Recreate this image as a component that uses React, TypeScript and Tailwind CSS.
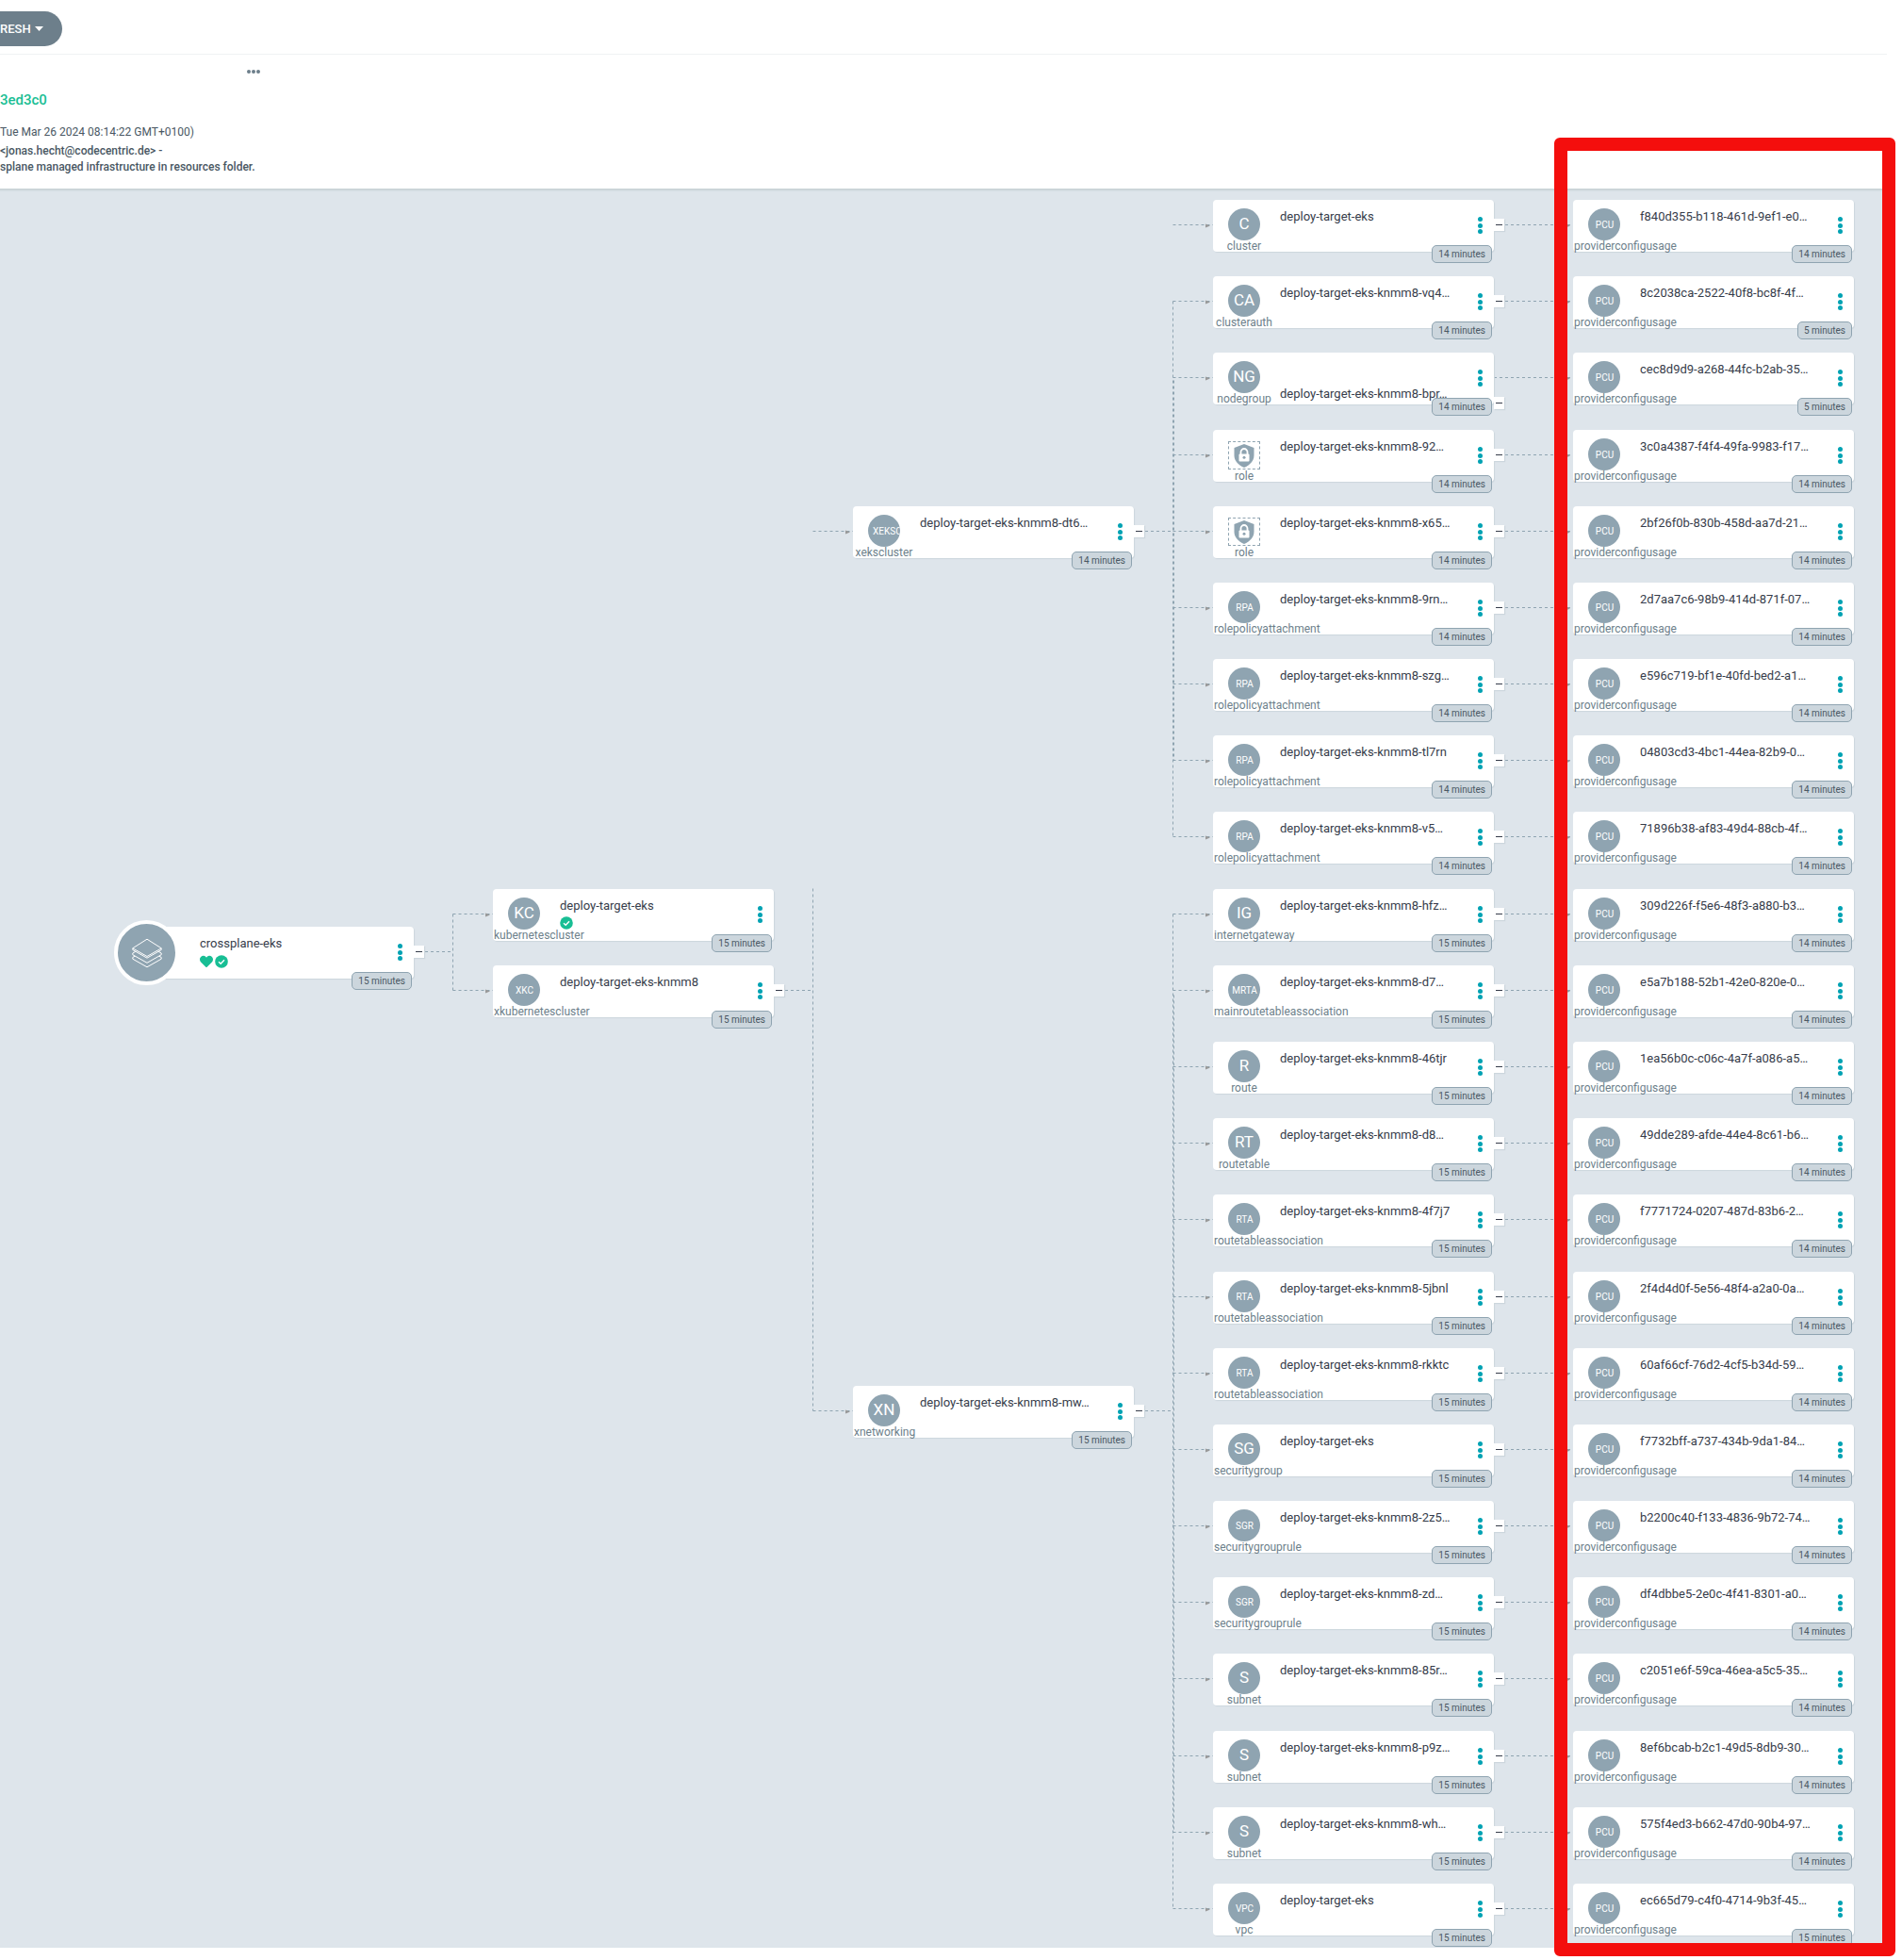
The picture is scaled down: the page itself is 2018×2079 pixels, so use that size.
import React from "react";

const CARD_W = 298;
const ROW_PITCH = 81.18;
const ROW_START = 12;
const COLS = [141, 523, 905, 1287, 1669];

const rowTop = (row: number) => Math.round(ROW_START + row * ROW_PITCH);
const lineY = (row: number) => rowTop(row) + 26.5;

type TreeNode = {
  col: number;
  row: number;
  abbr: string;
  kind: string;
  name: string;
  age: string;
  synced?: boolean;
  expandable?: boolean;
  wrapped?: boolean;
};

const resources: [string, string, string, string][] = [
  ["C", "cluster", "deploy-target-eks", "f840d355-b118-461d-9ef1-e0…"],
  ["CA", "clusterauth", "deploy-target-eks-knmm8-vq4…", "8c2038ca-2522-40f8-bc8f-4f…"],
  ["NG", "nodegroup", "deploy-target-eks-knmm8-bpr…", "cec8d9d9-a268-44fc-b2ab-35…"],
  ["", "role", "deploy-target-eks-knmm8-92…", "3c0a4387-f4f4-49fa-9983-f17…"],
  ["", "role", "deploy-target-eks-knmm8-x65…", "2bf26f0b-830b-458d-aa7d-21…"],
  ["RPA", "rolepolicyattachment", "deploy-target-eks-knmm8-9rn…", "2d7aa7c6-98b9-414d-871f-07…"],
  ["RPA", "rolepolicyattachment", "deploy-target-eks-knmm8-szg…", "e596c719-bf1e-40fd-bed2-a1…"],
  ["RPA", "rolepolicyattachment", "deploy-target-eks-knmm8-tl7rn", "04803cd3-4bc1-44ea-82b9-0…"],
  ["RPA", "rolepolicyattachment", "deploy-target-eks-knmm8-v5…", "71896b38-af83-49d4-88cb-4f…"],
  ["IG", "internetgateway", "deploy-target-eks-knmm8-hfz…", "309d226f-f5e6-48f3-a880-b3…"],
  ["MRTA", "mainroutetableassociation", "deploy-target-eks-knmm8-d7…", "e5a7b188-52b1-42e0-820e-0…"],
  ["R", "route", "deploy-target-eks-knmm8-46tjr", "1ea56b0c-c06c-4a7f-a086-a5…"],
  ["RT", "routetable", "deploy-target-eks-knmm8-d8…", "49dde289-afde-44e4-8c61-b6…"],
  ["RTA", "routetableassociation", "deploy-target-eks-knmm8-4f7j7", "f7771724-0207-487d-83b6-2…"],
  ["RTA", "routetableassociation", "deploy-target-eks-knmm8-5jbnl", "2f4d4d0f-5e56-48f4-a2a0-0a…"],
  ["RTA", "routetableassociation", "deploy-target-eks-knmm8-rkktc", "60af66cf-76d2-4cf5-b34d-59…"],
  ["SG", "securitygroup", "deploy-target-eks", "f7732bff-a737-434b-9da1-84…"],
  ["SGR", "securitygrouprule", "deploy-target-eks-knmm8-2z5…", "b2200c40-f133-4836-9b72-74…"],
  ["SGR", "securitygrouprule", "deploy-target-eks-knmm8-zd…", "df4dbbe5-2e0c-4f41-8301-a0…"],
  ["S", "subnet", "deploy-target-eks-knmm8-85r…", "c2051e6f-59ca-46ea-a5c5-35…"],
  ["S", "subnet", "deploy-target-eks-knmm8-p9z…", "8ef6bcab-b2c1-49d5-8db9-30…"],
  ["S", "subnet", "deploy-target-eks-knmm8-wh…", "575f4ed3-b662-47d0-90b4-97…"],
  ["VPC", "vpc", "deploy-target-eks", "ec665d79-c4f0-4714-9b3f-45…"],
];

const usageAge = (row: number) => {
  if (row === 1 || row === 2) return "5 minutes";
  return row === 22 ? "15 minutes" : "14 minutes";
};

const nodes: TreeNode[] = [
  { col: 1, row: 9, abbr: "KC", kind: "kubernetescluster", name: "deploy-target-eks", age: "15 minutes", synced: true },
  { col: 1, row: 10, abbr: "XKC", kind: "xkubernetescluster", name: "deploy-target-eks-knmm8", age: "15 minutes", expandable: true },
  { col: 2, row: 4, abbr: "XEKSC", kind: "xekscluster", name: "deploy-target-eks-knmm8-dt6…", age: "14 minutes", expandable: true },
  { col: 2, row: 15.5, abbr: "XN", kind: "xnetworking", name: "deploy-target-eks-knmm8-mw…", age: "15 minutes", expandable: true },
  ...resources.map(([abbr, kind, name], row) => ({
    col: 3,
    row,
    abbr,
    kind,
    name,
    age: row < 9 ? "14 minutes" : "15 minutes",
    expandable: true,
    wrapped: kind === "nodegroup",
  })),
  ...resources.map(([, , , usage], row) => ({
    col: 4,
    row,
    abbr: "PCU",
    kind: "providerconfigusage",
    name: usage,
    age: usageAge(row),
  })),
];

function CheckIcon() {
  return (
    <svg className="size-3.5" viewBox="0 0 14 14" aria-label="Synced">
      <circle cx="7" cy="7" r="6.8" fill="#18be94" />
      <path d="M4 7.2 6.2 9.2 10 5.2" fill="none" stroke="#fff" strokeWidth="1.4" />
    </svg>
  );
}

function HeartIcon() {
  return (
    <svg className="size-3.5" viewBox="0 0 512 512" aria-label="Healthy">
      <path
        fill="#18be94"
        d="M462.3 62.6C407.5 15.9 326 24.3 275.700 76.200L256 96.500l-19.700-20.300C186.100 24.300 104.500 15.900 49.700 62.600c-62.800 53.600-66.100 149.800-9.900 207.900l193.500 199.800c12.500 12.900 32.800 12.900 45.300 0l193.500-199.800c56.300-58.100 53-154.300-9.800-207.900z"
      />
    </svg>
  );
}

function RoleIcon() {
  return (
    <div className="mt-3 mb-px flex h-[30px] w-[34px] items-center justify-center border border-dashed border-[#8fa4b1]">
      <svg className="h-[25px] w-[22px]" viewBox="0 0 22 25">
        <path d="M11 0 21.500 4v8c0 6-4.500 10.500-10.500 13C5 22.500.5 18 .5 12V4Z" fill="#8fa4b1" />
        <path d="M7.500 11V8.500a3.500 3.500 0 0 1 7 0V11" fill="none" stroke="#fff" strokeWidth="1.800" />
        <rect x="5.500" y="10.500" width="11" height="8" rx="1" fill="#fff" />
        <circle cx="11" cy="14.200" r="1.500" fill="#8fa4b1" />
      </svg>
    </div>
  );
}

function Kebab() {
  return (
    <button type="button" aria-label="Node actions" className="absolute top-[18px] right-3 flex h-[18px] w-[5px] flex-col items-center justify-between">
      <span className="size-[5px] rounded-full bg-[#00a2b3]" />
      <span className="size-[5px] rounded-full bg-[#00a2b3]" />
      <span className="size-[5px] rounded-full bg-[#00a2b3]" />
    </button>
  );
}

function Age({ children }: { children: React.ReactNode }) {
  return (
    <span className="absolute top-12 right-[2px] flex h-[19px] items-center rounded-[5px] border border-[#8fa4b1] bg-[#ccd6dd] px-1.5 text-[10px] leading-4 whitespace-nowrap text-[#495763]">
      {children}
    </span>
  );
}

function Toggle({ low }: { low?: boolean }) {
  return (
    <button
      type="button"
      aria-label="Collapse children"
      className={
        (low ? "top-[47px]" : "top-5") +
        " absolute left-full flex h-[13px] w-[11px] items-center justify-center bg-white shadow-[1px_1px_1px_#ccd6dd]"
      }
    >
      <span className="h-px w-[7px] bg-[#363c4a]" />
    </button>
  );
}

function NodeCard({ node }: { node: TreeNode }) {
  return (
    <article
      className="absolute flex h-[55px] w-[298px] rounded bg-white shadow-[1px_1px_1px_#ccd6dd]"
      style={{ left: COLS[node.col], top: rowTop(node.row) }}
    >
      <div className="ml-px flex w-16 flex-col items-center text-[#6d7f8b]">
        {node.abbr ? (
          <div className="mt-[9px] flex size-[34px] shrink-0 items-center overflow-hidden rounded-full bg-[#8fa4b1] text-white">
            <span
              className={
                node.abbr.length > 2
                  ? "mx-auto max-w-full pl-px text-[10px]" + (node.abbr.length > 4 ? " ml-1" : "")
                  : "mx-auto text-[17px]"
              }
            >
              {node.abbr}
            </span>
          </div>
        ) : (
          <RoleIcon />
        )}
        <div className="w-full text-center text-[12px] leading-3 whitespace-nowrap">{node.kind}</div>
      </div>
      <div className={(node.wrapped ? "pt-[35px]" : "pt-[9px]") + " ml-1.5 text-[13px] leading-[18px] whitespace-nowrap text-[#363c4a]"}>
        <div>{node.name}</div>
        {node.synced && (
          <div className="pt-0.5">
            <CheckIcon />
          </div>
        )}
      </div>
      <Kebab />
      <Age>{node.age}</Age>
      {node.expandable && <Toggle low={node.wrapped} />}
    </article>
  );
}

function RootCard() {
  return (
    <article
      className="absolute h-[55px] w-[298px] rounded bg-white pt-[9px] pl-[71px] shadow-[1px_1px_1px_#ccd6dd]"
      style={{ left: COLS[0], top: rowTop(9.5) }}
    >
      <div className="absolute -top-[7px] -left-5 flex size-[69px] items-center justify-center rounded-full border-4 border-white bg-[#8fa4b1]">
        <svg className="size-8" viewBox="0 0 32 32" fill="#8fa4b1" stroke="#fff" strokeWidth="1" strokeLinejoin="round">
          <path d="M.8 20.500 16 12l15.200 8.500v1.700L16 30.800.8 22.200Z" />
          <path d="M.8 16 16 7.500 31.200 16v1.700L16 26.300.8 17.700Z" />
          <path d="M.8 10.800 16 1.200l15.200 9.600v1.700L16 21.200.8 12.500Z" />
          <path d="M.8 10.800 16 19.500l15.200-8.700" fill="none" />
        </svg>
      </div>
      <div className="text-[13px] leading-[18px] text-[#363c4a]">crossplane-eks</div>
      <div className="flex gap-0.5 pt-[3px]">
        <HeartIcon />
        <CheckIcon />
      </div>
      <Kebab />
      <Age>15 minutes</Age>
      <Toggle />
    </article>
  );
}

function Edges({ height }: { height: number }) {
  const joint = (col: number) => COLS[col] - 42.5;
  const h = (x1: number, x2: number, row: number, key: string) => (
    <line key={key} x1={x1} x2={x2} y1={lineY(row)} y2={lineY(row)} />
  );
  return (
    <svg className="absolute inset-0 w-full" height={height} fill="none" stroke="#8fa4b1" strokeWidth="1">
      <g strokeDasharray="3 3">
        {h(COLS[0] + CARD_W, joint(1), 9.5, "root")}
        {h(COLS[1] + CARD_W, joint(2), 10, "xkc")}
        {h(COLS[2] + CARD_W, joint(3), 4, "xeks")}
        {h(COLS[2] + CARD_W, joint(3), 15.5, "xn")}
        {nodes.map((n) =>
          h(n.col === 4 ? COLS[3] + CARD_W : joint(n.col), COLS[n.col], n.row, n.col + "-" + n.row),
        )}
        <line x1={joint(1)} x2={joint(1)} y1={lineY(9)} y2={lineY(10)} />
        <line x1={joint(2)} x2={joint(2)} y1={lineY(9) - 27} y2={lineY(15.5)} />
        <line x1={joint(3)} x2={joint(3)} y1={lineY(1)} y2={lineY(8)} />
        <line x1={joint(3)} x2={joint(3)} y1={lineY(9)} y2={lineY(22)} />
      </g>
      <g strokeDasharray="3 3">
        <line x1={joint(3) + 1} x2={joint(3) + 1} y1={lineY(1) + 84} y2={lineY(7)} />
        <line x1={joint(3) + 1} x2={joint(3) + 1} y1={lineY(9) + 86} y2={lineY(21)} />
      </g>
      <g fill="#999" stroke="none">
        {nodes.map((n) => {
          const x = COLS[n.col] - 8;
          const y = lineY(n.row) - 1;
          return <path key={n.col + "-" + n.row} d={`M${x} ${y}L${x + 5} ${y + 2}L${x} ${y + 4}Z`} />;
        })}
      </g>
    </svg>
  );
}

export default function App() {
  const canvasHeight = rowTop(22) + 68;
  return (
    <div className="relative min-h-screen overflow-hidden bg-white font-['Roboto',sans-serif]">
      <header className="bg-white">
        <div className="mr-4 flex h-[58px] items-center border-b border-[#f0f2f3] pt-1">
          <button type="button" className="flex h-[37px] items-center gap-1 rounded-r-full bg-[#6d7f8b] pr-5 text-[13px] font-medium text-white">
            RESH
            <svg className="h-[5px] w-[9px]" viewBox="0 0 9 5">
              <path d="M0 0h9L4.500 5Z" fill="#fff" />
            </svg>
          </button>
        </div>
        <section className="h-[142px] w-[276px] pt-[15px] text-[12px] whitespace-nowrap text-[#495763]">
          <button type="button" aria-label="More" className="ml-auto flex h-[5px] w-[14px] items-center justify-between">
            <span className="size-1 rounded-full bg-[#6d7f8b]" />
            <span className="size-1 rounded-full bg-[#6d7f8b]" />
            <span className="size-1 rounded-full bg-[#6d7f8b]" />
          </button>
          <a href="#3ed3c0" className="mt-[18px] block text-[15px] leading-5 font-medium text-[#18be94]">
            3ed3c0
          </a>
          <p className="mt-3.5 leading-5">Tue Mar 26 2024 08:14:22 GMT+0100)</p>
          <p className="mt-0.5 leading-[17px] font-medium">
            &lt;jonas.hecht@codecentric.de&gt; -
            <br />
            splane managed infrastructure in resources folder.
          </p>
        </section>
      </header>
      <div className="relative">
        <main
          className="relative mr-4 overflow-hidden bg-[#dee5eb] shadow-[inset_0_4px_2px_-2px_#c8d2d5]"
          style={{ height: canvasHeight }}
        >
          <Edges height={canvasHeight} />
          <RootCard />
          {nodes.map((node) => (
            <NodeCard key={node.col + "-" + node.row} node={node} />
          ))}
        </main>
        <div className="pointer-events-none absolute -top-[54px] -bottom-[9px] left-[1649px] z-20 w-[362px] rounded-md border-[14px] border-[#f40e0d]" />
      </div>
    </div>
  );
}
